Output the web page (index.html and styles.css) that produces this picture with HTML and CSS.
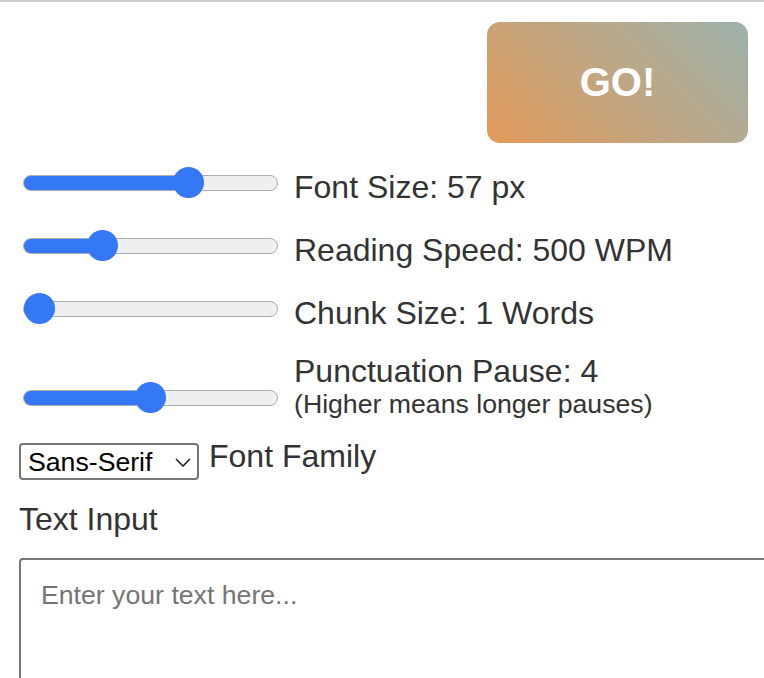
FILE: index.html
```html
<!DOCTYPE html>
<html lang="en">
<head>
<meta charset="utf-8">
<title>Speed Reader</title>
<link rel="stylesheet" href="styles.css">
</head>
<body>
<div class="page">
  <div class="header">
    <button class="go-btn" type="button">GO!</button>
  </div>
  <div class="controls">
    <div class="row row-1">
      <input class="slider" type="range" min="10" max="80" value="57" style="--fill: 166px">
      <label class="label">Font Size: 57 px</label>
    </div>
    <div class="row row-2">
      <input class="slider" type="range" min="100" max="1500" value="500" style="--fill: 79px">
      <label class="label">Reading Speed: 500 WPM</label>
    </div>
    <div class="row row-3">
      <input class="slider" type="range" min="1" max="10" value="1" style="--fill: 15px">
      <label class="label">Chunk Size: 1 Words</label>
    </div>
    <div class="row row-4">
      <input class="slider slider-low" type="range" min="0" max="8" value="4" style="--fill: 127px">
      <label class="label">Punctuation Pause: 4<small class="hint">(Higher means longer pauses)</small></label>
    </div>
    <div class="select-row">
      <span class="select-wrap">
        <select class="font-select">
          <option>Sans-Serif</option>
          <option>Serif</option>
          <option>Monospace</option>
        </select>
        <svg class="chevron" width="16" height="9" viewBox="0 0 16 9"><path d="M1 1 L8 8 L15 1" fill="none" stroke="#222" stroke-width="1.6"/></svg>
      </span>
      <span class="label">Font Family</span>
    </div>
    <div class="text-label">Text Input</div>
    <textarea class="text-input" placeholder="Enter your text here..."></textarea>
  </div>
</div>
</body>
</html>
```

FILE: styles.css
```css
html, body {
  margin: 0;
  padding: 0;
  overflow: hidden;
  background: #fff;
}

body {
  font-family: "Liberation Sans", Arial, sans-serif;
  color: #333;
}

.page {
  border-top: 2px solid #cbcbcb;
  height: 676px;
  overflow: hidden;
}

.header {
  display: flex;
  justify-content: flex-end;
  padding: 20px 16px 0 0;
}

.go-btn {
  width: 261px;
  height: 121px;
  border: none;
  border-radius: 13px;
  background: linear-gradient(45deg, #e39a5a 0%, #9cb1ab 100%);
  color: #fff;
  font-family: "Liberation Sans", Arial, sans-serif;
  font-weight: bold;
  font-size: 40px;
  padding: 0;
}

.controls {
  display: flex;
  flex-direction: column;
  align-items: flex-start;
  padding-left: 19px;
}

.row {
  display: flex;
  align-items: flex-end;
}

.row-1 { margin-top: 24px; }
.row-2 { margin-top: 26px; }
.row-3 { margin-top: 26px; }
.row-4 { margin-top: 24px; }

.label {
  font-size: 32px;
  line-height: 34px;
  color: #333;
}

.hint {
  display: block;
  font-size: 26.67px;
  line-height: 26px;
  margin-top: 3px;
}

.slider {
  -webkit-appearance: none;
  appearance: none;
  width: 255px;
  height: 31px;
  margin: 0 16px 6px 4px;
  padding: 0;
  background: transparent;
}

.slider-low {
  margin-bottom: 4px;
}

.slider::-webkit-slider-runnable-track {
  height: 16px;
  box-sizing: border-box;
  border: 1px solid #adadad;
  border-radius: 8px;
  background: linear-gradient(#3478f6, #3478f6) no-repeat 0 0 / var(--fill) 100%, #efefef;
}

.slider::-webkit-slider-thumb {
  -webkit-appearance: none;
  appearance: none;
  width: 31px;
  height: 31px;
  border-radius: 50%;
  background: #3478f6;
  border: none;
  margin-top: -8.5px;
}

.select-row {
  display: flex;
  align-items: flex-start;
  gap: 10px;
  margin-top: 22px;
}

.select-wrap {
  position: relative;
  display: inline-block;
  margin-top: 4px;
}

.font-select {
  -webkit-appearance: none;
  appearance: none;
  width: 180px;
  height: 37px;
  box-sizing: border-box;
  border: 2px solid #767676;
  border-radius: 4px;
  background: #fff;
  color: #000;
  font-family: "Liberation Sans", Arial, sans-serif;
  font-size: 26.67px;
  padding: 0 0 0 7px;
  margin: 0;
}

.chevron {
  position: absolute;
  left: 156px;
  top: 15px;
  pointer-events: none;
}

.text-label {
  font-size: 32px;
  line-height: 34px;
  margin-top: 22px;
  color: #333;
}

.text-input {
  margin-top: 22px;
  width: 800px;
  height: 240px;
  box-sizing: border-box;
  border: 2px solid #767676;
  border-radius: 4px;
  padding: 20px;
  font-family: "Liberation Sans", Arial, sans-serif;
  font-size: 26.67px;
  resize: none;
}

.text-input::placeholder {
  color: #757575;
}
```
